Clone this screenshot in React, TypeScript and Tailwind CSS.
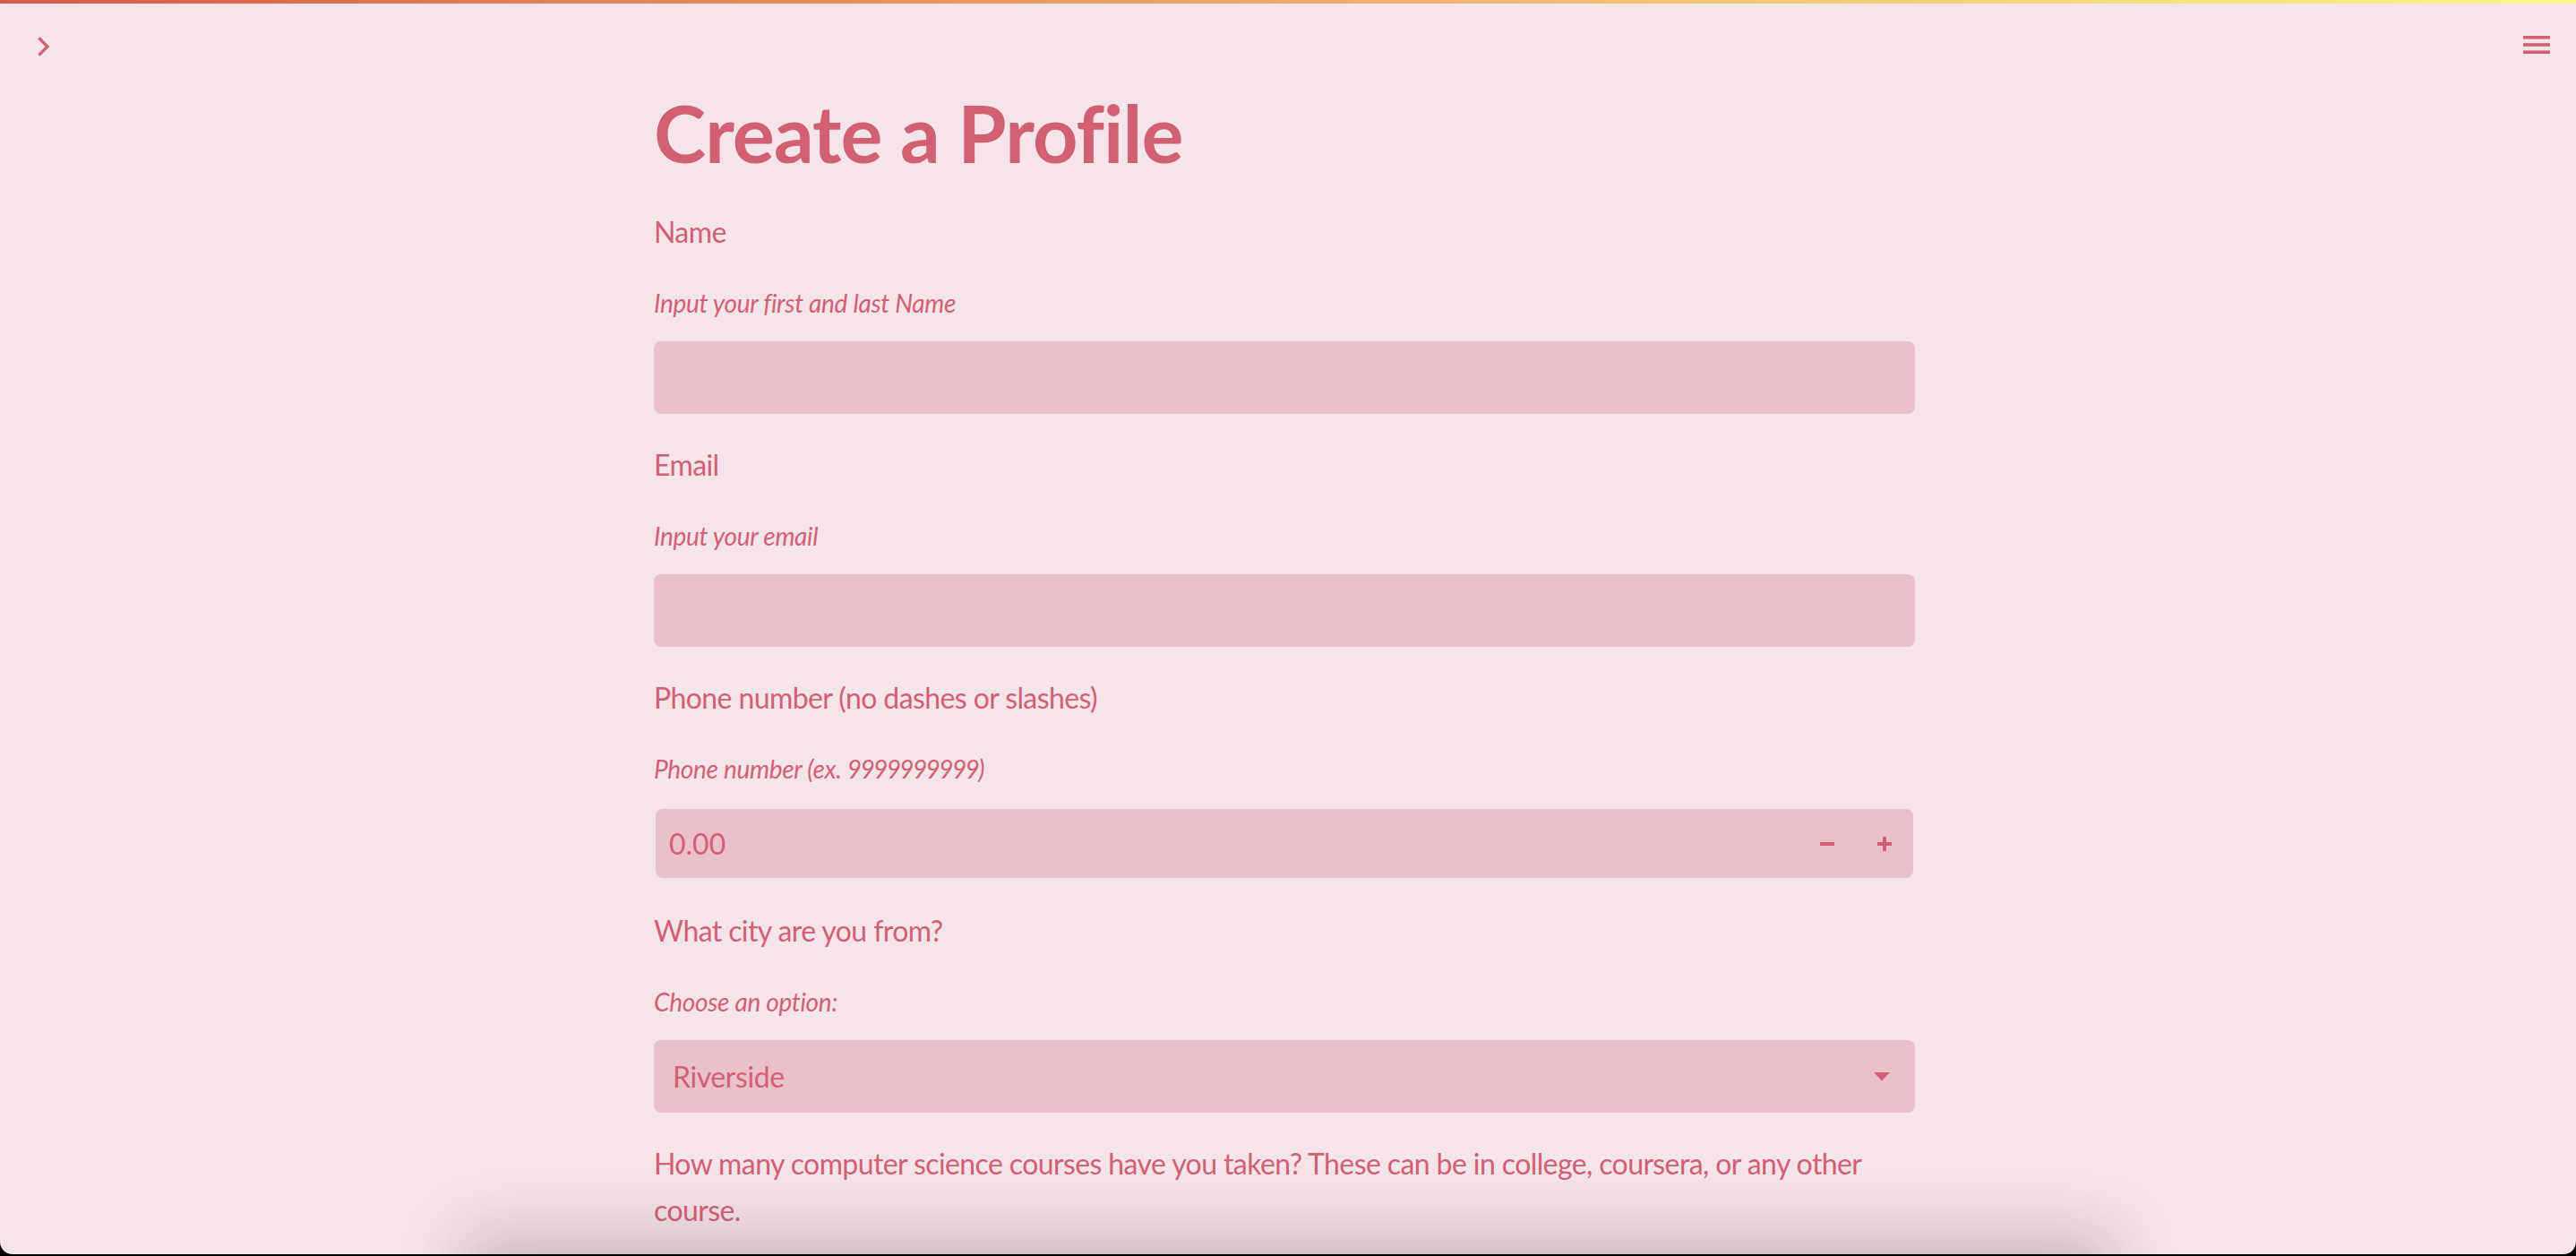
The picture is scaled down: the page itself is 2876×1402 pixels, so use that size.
import React from "react";

const TXT = "text-[#d16075]";

function Label({ children }: { children: React.ReactNode }) {
  return <div className={`text-[32px] leading-[52px] tracking-[-0.6px] ${TXT}`}>{children}</div>;
}

function Help({ children }: { children: React.ReactNode }) {
  return <div className={`mt-[33px] text-[28px] italic leading-[40px] tracking-[-0.3px] ${TXT}`}>{children}</div>;
}

function TextField({ label, help }: { label: string; help: string }) {
  return (
    <div className="flex flex-col pb-[31px]">
      <Label>{label}</Label>
      <Help>{help}</Help>
      <div className="mt-[23px] h-[81px] rounded-[8px] bg-[#eac0cb]" />
    </div>
  );
}

export default function App() {
  return (
    <div className="h-[1402px] w-full overflow-hidden bg-black font-[Lato,sans-serif]">
      <div className="relative h-[1400px] w-full overflow-hidden rounded-b-[14px] bg-[#f5e4ea]">
        <div className="h-[4px] w-full bg-gradient-to-r from-[#d65c48] to-[#f9f78a]" />
        <div className="flex h-[94px] items-start justify-between pl-[42px] pr-[29px]">
          <svg width="14" height="22" viewBox="0 0 14 22" className="mt-[37px]">
            <path d="M2.5 2.5 L11 11 L2.5 19.5" fill="none" stroke="#d16075" strokeWidth="3.2" strokeLinecap="square" />
          </svg>
          <svg width="30" height="20" viewBox="0 0 30 20" className="mt-[36px]">
            <rect x="0" y="0" width="30" height="3.6" fill="#d16075" />
            <rect x="0" y="8.2" width="30" height="3.6" fill="#d16075" />
            <rect x="0" y="16.4" width="30" height="3.6" fill="#d16075" />
          </svg>
        </div>
        <div className="flex justify-center pr-[8px]">
          <div className="flex w-[1408px] flex-col">
            <h1 className={`h-[100px] text-[88px] font-bold leading-[100px] tracking-[-0.9px] ${TXT}`}>Create a Profile</h1>
            <div className="h-[35px]" />
            <TextField label="Name" help="Input your first and last Name" />
            <TextField label="Email" help="Input your email" />
            <div className="flex flex-col pb-[31px]">
              <Label>Phone number (no dashes or slashes)</Label>
              <Help>
                Phone number (ex. <span className="tracking-[-1.6px]">9999999999</span>)
              </Help>
              <div className="mt-[23px] flex h-[81px] py-[2px] pl-[2px] pr-[2px]">
                <div className="flex flex-1 items-center rounded-[8px] bg-[#eac0cb] pl-[15px] pr-[24px]">
                  <span className={`flex-1 text-[32px] ${TXT}`}>0.00</span>
                  <svg width="16" height="16" viewBox="0 0 16 16">
                    <rect x="0" y="6" width="16" height="4" fill="#d16075" />
                  </svg>
                  <svg width="16" height="16" viewBox="0 0 16 16" className="ml-[48px]">
                    <rect x="0" y="6" width="16" height="4" fill="#d16075" />
                    <rect x="6" y="0" width="4" height="16" fill="#d16075" />
                  </svg>
                </div>
              </div>
            </div>
            <div className="flex flex-col pb-[31px]">
              <Label>What city are you from?</Label>
              <Help>Choose an option:</Help>
              <div className="mt-[23px] flex h-[81px] items-center rounded-[8px] bg-[#eac0cb] pl-[21px] pr-[28px]">
                <span className={`flex-1 text-[32px] tracking-[-0.4px] ${TXT}`}>Riverside</span>
                <svg width="18" height="10" viewBox="0 0 18 10">
                  <path d="M0 0 L18 0 L9 9.5 Z" fill="#d16075" />
                </svg>
              </div>
            </div>
            <div className="w-[1408px]">
              <Label>
                How many computer science courses have you taken? These can be in college, coursera, or any other course.
              </Label>
            </div>
          </div>
        </div>
        <div className="pointer-events-none absolute left-[540px] right-[540px] top-[1400px] h-[80px] shadow-[0_0_70px_24px_rgba(110,70,85,0.28)]" />
      </div>
    </div>
  );
}
